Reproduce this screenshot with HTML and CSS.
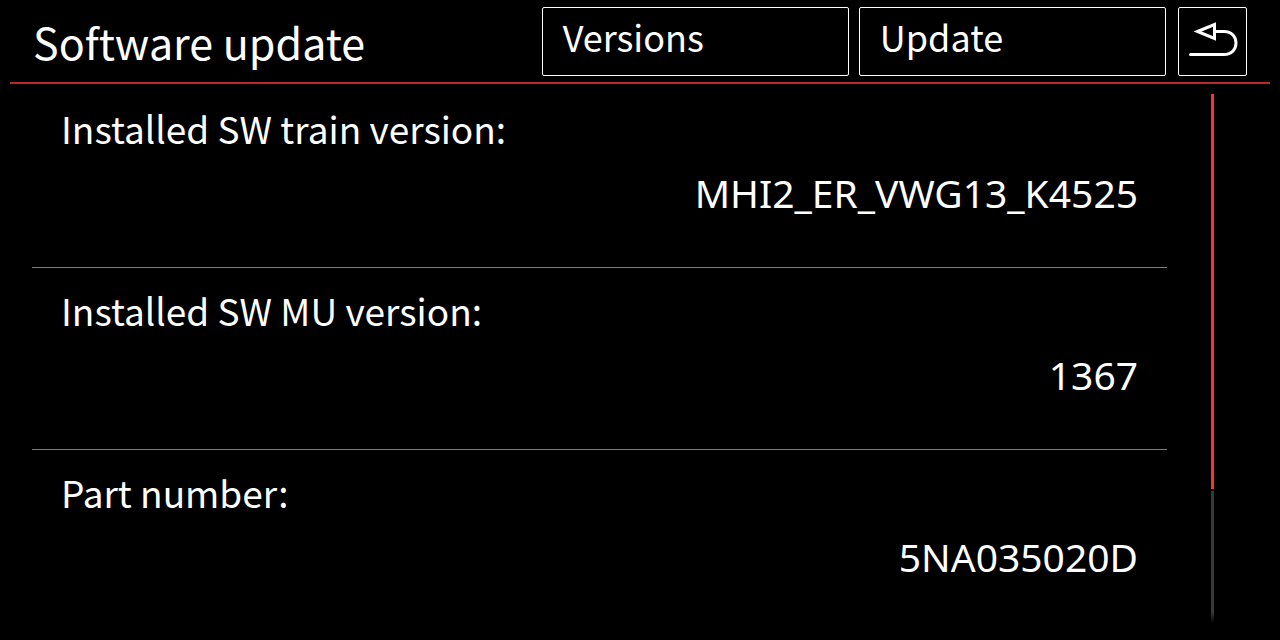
FILE: index.html
```
<!DOCTYPE html>
<html lang="en">

<head>
    <meta charset="UTF-8">
    <meta name="viewport" content="width=device-width, initial-scale=1.0">
    <title>Software update</title>
    <link rel="stylesheet" href="styles.css">
</head>

<body>
    <header class="header">
        <h1 class="title">Software update</h1>
        <nav class="actions">
            <button class="btn">Versions</button>
            <button class="btn">Update</button>
            <button class="btn back" aria-label="Back">
                <svg viewBox="0 0 67 67" fill="none" stroke="#fff" stroke-width="3" stroke-linecap="round">
                    <path d="M11.5 46.5H45C61 46.5 61 23.5 45 23.5H36" />
                    <path d="M18.5 23.5L35.5 16.5V30.5Z" stroke-width="3" />
                </svg>
            </button>
        </nav>
    </header>
    <main class="content">
        <dl class="list">
            <div class="item">
                <dt>Installed SW train version:</dt>
                <dd>MHI2_ER_VWG13_K4525</dd>
            </div>
            <div class="item">
                <dt>Installed SW MU version:</dt>
                <dd>1367</dd>
            </div>
            <div class="item">
                <dt>Part number:</dt>
                <dd>5NA035020D</dd>
            </div>
        </dl>
        <div class="scrollbar">
            <div class="thumb"></div>
        </div>
    </main>
</body>

</html>
```
FILE: styles.css
```
* {
    margin: 0;
    padding: 0;
    box-sizing: border-box;
}

body {
    height: 100vh;
    display: flex;
    flex-direction: column;
    overflow: hidden;
    background-color: #000;
    color: #fff;
    font-family: "Noto Sans CJK SC", "Noto Sans", sans-serif;
    font-size: 37px;
}

.header {
    display: flex;
    justify-content: space-between;
    align-items: flex-start;
    margin: 0 10px;
    padding: 7px 23px 6px;
    border-bottom: 2px solid #b82a26;
}

.title {
    font-size: 43px;
    font-weight: normal;
    line-height: 69px;
}

.actions {
    display: flex;
    gap: 10px;
}

.btn {
    width: 24vw;
    height: 69px;
    padding: 0 20px 12px;
    border: 1px solid #fff;
    border-radius: 2px;
    background-color: #000;
    color: #fff;
    font: inherit;
    font-size: 36px;
    line-height: 54px;
    text-align: left;
}

.back {
    width: 69px;
    margin-left: 2px;
    padding: 0;
}

.back svg {
    display: block;
    width: 67px;
    height: 67px;
}

.content {
    flex: 1;
    min-height: 0;
    display: flex;
    gap: 44px;
    padding: 2px 66px 17px 32px;
}

.list {
    flex: 1;
}

.item {
    height: 182px;
    padding: 11px 29px 0;
    border-bottom: 1px solid #7c7c7c;
}

.item:last-child {
    border-bottom: none;
}

.item dt {
    line-height: 63px;
}

.item dd {
    font-family: "Noto Sans", sans-serif;
    font-size: 39px;
    line-height: 65px;
    text-align: right;
}

.scrollbar {
    width: 3px;
    margin-top: 8px;
    background: linear-gradient(#383838 98%, #000);
}

.thumb {
    height: 75%;
    border-bottom: 2px solid #000;
    background-color: #ff3030;
}
```
